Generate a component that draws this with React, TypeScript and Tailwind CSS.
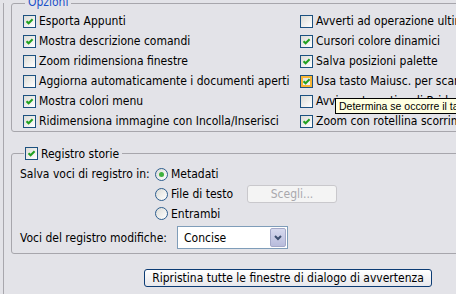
import React from 'react';

const Check: React.FC<{ checked?: boolean; hover?: boolean }> = ({ checked, hover }) => (
  <span className="relative flex h-[13px] w-[13px] shrink-0 items-center justify-center border border-[#1c5180] bg-gradient-to-br from-[#dcdcd7] to-white">
    {hover && <span className="absolute inset-0 border-2 border-[#f8b636]" />}
    {checked && (
      <svg width="9" height="9" viewBox="0 0 9 9" className="relative">
        <path d="M1.5 4.2 L3.6 6.3 L7.6 2.2" fill="none" stroke="#21a121" strokeWidth="2" />
      </svg>
    )}
  </span>
);

const Radio: React.FC<{ checked?: boolean }> = ({ checked }) => (
  <span className="flex h-[13px] w-[13px] shrink-0 items-center justify-center rounded-full border border-[#2c5d8e] bg-gradient-to-br from-[#dcdcd7] to-white">
    {checked && <span className="h-[5px] w-[5px] rounded-full bg-[#3fb13f]" />}
  </span>
);

const Row: React.FC<{ checked?: boolean; hover?: boolean; label: string }> = ({ checked, hover, label }) => (
  <div className="flex h-[20px] items-center gap-[3px] whitespace-nowrap">
    <Check checked={checked} hover={hover} />
    <span>{label}</span>
  </div>
);

const left = [
  { checked: true, label: 'Esporta Appunti' },
  { checked: true, label: 'Mostra descrizione comandi' },
  { checked: false, label: 'Zoom ridimensiona finestre' },
  { checked: false, label: 'Aggiorna automaticamente i documenti aperti' },
  { checked: true, label: 'Mostra colori menu' },
  { checked: true, label: 'Ridimensiona immagine con Incolla/Inserisci' },
];

const right = [
  { checked: false, label: 'Avverti ad operazione ultimata' },
  { checked: true, label: 'Cursori colore dinamici' },
  { checked: true, label: 'Salva posizioni palette' },
  { checked: true, hover: true, label: 'Usa tasto Maiusc. per scambiare strumento' },
  { checked: false, label: 'Avvio automatico di Bridge' },
  { checked: true, label: 'Zoom con rotellina scorrimento' },
];

export default function App() {
  return (
    <div
      className="relative h-[294px] w-[456px] overflow-hidden bg-[#e3e3e8] text-[12px] leading-none text-black"
      style={{ fontFamily: '"DejaVu Sans Condensed", "DejaVu Sans", sans-serif' }}
    >
      <div className="ml-[3px] h-full border-l border-[#a8a7ad]">
        {/* Opzioni */}
        <div className="relative ml-[7px] mt-[3px] w-[480px] rounded-[3px] border border-[#a7a6ac] pl-[11px] pt-[7px]">
          <span className="absolute -top-[8px] left-[13px] bg-[#e3e3e8] px-[3px] text-[#1b50c8]">Opzioni</span>
          <div className="grid grid-cols-[277px_1fr]">
            <div className="flex flex-col">
              {left.map((r) => (
                <Row key={r.label} {...r} />
              ))}
            </div>
            <div className="flex flex-col">
              {right.map((r) => (
                <Row key={r.label} {...r} />
              ))}
            </div>
          </div>
        </div>

        {/* Registro storie */}
        <div className="relative ml-[7px] mt-[21px] w-[480px] rounded-[3px] border border-[#a7a6ac] pb-[4px] pl-[8px] pt-[10px]">
          <div className="absolute -top-[7px] left-[12px] flex items-center gap-[3px] bg-[#e3e3e8] px-[1px] pr-[3px]">
            <Check checked />
            <span>Registro storie</span>
          </div>
          <div className="flex">
            <span className="mt-[4px] w-[135px]">Salva voci di registro in:</span>
            <div className="flex flex-col">
              <div className="flex h-[20px] items-center gap-[3px]">
                <Radio checked />
                <span>Metadati</span>
              </div>
              <div className="flex h-[20px] items-center">
                <Radio />
                <span className="ml-[3px] w-[76px]">File di testo</span>
                <button className="h-[18px] w-[90px] rounded-[3px] border border-[#c9c8cc] bg-[#f4f4f4] text-[#a9a8ad]">
                  Scegli...
                </button>
              </div>
              <div className="flex h-[19px] items-center gap-[3px]">
                <Radio />
                <span>Entrambi</span>
              </div>
            </div>
          </div>
          <div className="mt-[3px] flex items-center">
            <span className="w-[157px]">Voci del registro modifiche:</span>
            <div className="flex h-[23px] w-[111px] items-center border border-[#7f9db9] bg-white p-[1px]">
              <span className="flex-1 pl-[5px]">Concise</span>
              <span className="flex h-full w-[16px] items-center justify-center rounded-[2px] border border-[#a3a8c8] bg-gradient-to-b from-[#d6d9ee] to-[#b8bcdc]">
                <svg width="8" height="6" viewBox="0 0 8 6">
                  <path d="M1 1 L4 4 L7 1" fill="none" stroke="#3d4f70" strokeWidth="2" />
                </svg>
              </span>
            </div>
          </div>
        </div>

        <div className="mt-[15px] flex">
          <button className="ml-[140px] h-[18px] w-[288px] rounded-[3px] border border-[#0c3c74] bg-gradient-to-b from-white to-[#e8e8ec] pb-[1px] text-[12px]">
            Ripristina tutte le finestre di dialogo di avvertenza
          </button>
        </div>
      </div>

      <div
        className="absolute left-[335px] top-[98px] flex h-[16px] items-center whitespace-nowrap border border-black bg-[#ffffe1] px-[3px] text-[10.5px]"
        style={{ fontFamily: '"Liberation Sans", sans-serif' }}
      >
        Determina se occorre il tasto Maiusc. per scambiare strumento
      </div>
    </div>
  );
}
